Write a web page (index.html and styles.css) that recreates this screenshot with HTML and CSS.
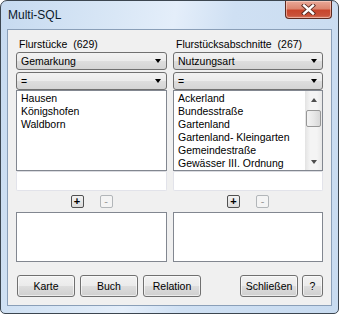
FILE: index.html
```html
<!DOCTYPE html>
<html>
<head>
<meta charset="utf-8">
<link rel="stylesheet" href="styles.css">
</head>
<body>
<div class="window">
  <div class="titlebar">
    <span class="title">Multi-SQL</span>
    <div class="close">
      <svg width="17" height="11" viewBox="0 0 17 11">
        <path d="M4 1.5 L13 9.5 M13 1.5 L4 9.5" stroke="#5a2a22" stroke-width="4.2" stroke-linecap="square" fill="none"/>
        <path d="M4 1.5 L13 9.5 M13 1.5 L4 9.5" stroke="#ffffff" stroke-width="2.4" stroke-linecap="square" fill="none"/>
      </svg>
    </div>
  </div>
  <div class="client">
    <div class="columns">
      <div class="col">
        <div class="label">Flurstücke&nbsp; (629)</div>
        <div class="combo"><span>Gemarkung</span><i class="arrow"></i></div>
        <div class="combo"><span>=</span><i class="arrow"></i></div>
        <div class="list">
          <div class="items">
            <div>Hausen</div>
            <div>Königshofen</div>
            <div>Waldborn</div>
          </div>
        </div>
        <div class="edit"></div>
        <div class="pm">
          <div class="pmbtn">+</div>
          <div class="pmbtn disabled">-</div>
        </div>
        <div class="list small"></div>
      </div>
      <div class="col">
        <div class="label">Flurstücksabschnitte&nbsp; (267)</div>
        <div class="combo"><span>Nutzungsart</span><i class="arrow"></i></div>
        <div class="combo"><span>=</span><i class="arrow"></i></div>
        <div class="list">
          <div class="items">
            <div>Ackerland</div>
            <div>Bundesstraße</div>
            <div>Gartenland</div>
            <div>Gartenland- Kleingarten</div>
            <div>Gemeindestraße</div>
            <div>Gewässer III. Ordnung</div>
          </div>
          <div class="scrollbar">
            <div class="sbtn"><i class="up"></i></div>
            <div class="track"><div class="thumb"></div></div>
            <div class="sbtn"><i class="down"></i></div>
          </div>
        </div>
        <div class="edit"></div>
        <div class="pm">
          <div class="pmbtn">+</div>
          <div class="pmbtn disabled">-</div>
        </div>
        <div class="list small"></div>
      </div>
    </div>
    <div class="footer">
      <div class="btn">Karte</div>
      <div class="btn">Buch</div>
      <div class="btn">Relation</div>
      <div class="btn push">Schließen</div>
      <div class="btn q">?</div>
    </div>
  </div>
</div>
</body>
</html>
```
FILE: styles.css
```css
* { box-sizing: border-box; }
html, body { margin: 0; padding: 0; background: #ffffff; }
body { font-family: "Liberation Sans", Arial, sans-serif; font-size: 10.5px; color: #000; }

.window {
  width: 339px;
  height: 314px;
  border: 1px solid #3c4650;
  border-radius: 7px 7px 5px 5px;
  background: linear-gradient(100deg, #c6daf0 0%, #d9e7f6 30%, #e4eefa 45%, #cfe0f3 60%, #c8dbf0 100%);
  overflow: hidden;
  display: flex;
  flex-direction: column;
}

.titlebar {
  height: 28px;
  display: flex;
  align-items: flex-start;
}
.title {
  padding: 7px 0 0 7px;
  font-size: 12px;
  line-height: 14px;
  color: #0b1a2c;
}
.close {
  margin-left: auto;
  margin-right: 6px;
  width: 47px;
  height: 18px;
  border: 1px solid #5d2a20;
  border-top: none;
  border-radius: 0 0 4px 4px;
  background: linear-gradient(#e9a898 0%, #dc8670 45%, #c8452c 55%, #c9523a 85%, #d77a62 100%);
  box-shadow: inset 0 0 0 1px rgba(255,220,210,0.55);
  display: flex;
  align-items: center;
  justify-content: center;
}
.close svg { display: block; }

.client {
  margin-left: 6px;
  width: 325px;
  height: 277px;
  border: 1px solid #8a9fb8;
  background: #f0f0f0;
  padding: 8px 8px 0 8px;
  display: flex;
  flex-direction: column;
}

.columns {
  display: flex;
  gap: 6px;
}
.col {
  width: 151px;
  display: flex;
  flex-direction: column;
}
.col + .col { width: 150px; }

.label {
  height: 14px;
  line-height: 13px;
  padding-left: 3px;
}

.combo {
  height: 18px;
  border: 1px solid #707070;
  border-radius: 3px;
  background: linear-gradient(#f2f2f2 0%, #ebebeb 48%, #dddddd 52%, #d4d4d4 100%);
  display: flex;
  align-items: center;
  padding: 0 5px 0 4px;
  margin-bottom: 2px;
}
.combo span { flex: 1; line-height: 14px; }
.arrow {
  width: 0; height: 0;
  border-left: 3.5px solid transparent;
  border-right: 3.5px solid transparent;
  border-top: 4px solid #000;
}

.list {
  height: 81px;
  border: 1px solid #828790;
  background: #ffffff;
  display: flex;
  margin-top: -2px;
}
.items {
  flex: 1;
  padding: 1px 0 0 4px;
  line-height: 13px;
  white-space: nowrap;
  overflow: hidden;
}
.list.small {
  height: 50px;
  margin-top: 4px;
}

.scrollbar {
  width: 17px;
  display: flex;
  flex-direction: column;
  background: linear-gradient(90deg, #e3e3e3, #f4f4f4 30%, #f4f4f4 70%, #e8e8e8);
}
.sbtn {
  height: 17px;
  display: flex;
  align-items: center;
  justify-content: center;
}
.up, .down {
  width: 0; height: 0;
  border-left: 3.5px solid transparent;
  border-right: 3.5px solid transparent;
}
.up { border-bottom: 4px solid #4d4d4d; }
.down { border-top: 4px solid #4d4d4d; }
.track {
  flex: 1;
  padding: 2px 1px 0 1px;
}
.thumb {
  height: 17px;
  border: 1px solid #979797;
  border-radius: 2px;
  background: linear-gradient(90deg, #f3f3f3, #e8e8e8 50%, #d8d8d8);
}

.edit {
  height: 20px;
  border: 1px solid #e2e3ea;
  border-top-color: #dadbe0;
  border-radius: 2px;
  background: #ffffff;
}

.pm {
  margin-top: 4px;
  height: 13px;
  display: flex;
  justify-content: center;
  gap: 16px;
}
.pmbtn {
  width: 13px;
  height: 13px;
  border: 1px solid #505050;
  border-radius: 2px;
  background: linear-gradient(#f2f2f2, #dcdcdc);
  font-weight: bold;
  font-size: 11px;
  line-height: 10px;
  text-align: center;
}
.pmbtn.disabled {
  border-color: #b2b6b9;
  background: #f4f4f4;
  color: #9a9a9a;
  font-weight: normal;
}

.footer {
  margin-top: 13px;
  margin-left: 1px;
  display: flex;
  gap: 5px;
}
.btn {
  width: 58px;
  height: 22px;
  border: 1px solid #707070;
  border-radius: 3px;
  background: linear-gradient(#f2f2f2 0%, #ebebeb 48%, #dddddd 52%, #cfcfcf 100%);
  box-shadow: inset 0 0 0 1px rgba(255,255,255,0.6);
  text-align: center;
  line-height: 20px;
}
.btn.push { margin-left: auto; }
.btn.q { width: 21px; margin-left: -1px; }
```
